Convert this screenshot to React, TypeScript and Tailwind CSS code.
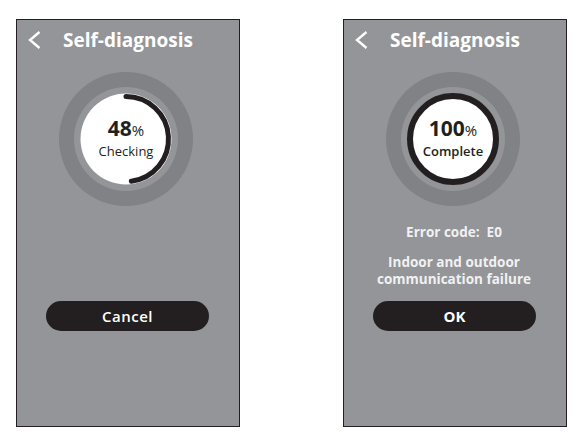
const FONT = { fontFamily: '"Open Sans", "Liberation Sans", sans-serif' };

function Gauge({ percent, label }: { percent: number; label: string }) {
  const r = 42.5;
  const angle = (percent / 100) * 2 * Math.PI;
  const ex = 67 + r * Math.sin(angle);
  const ey = 67 - r * Math.cos(angle);
  const large = percent > 50 ? 1 : 0;

  return (
    <div className="relative w-[134px] h-[134px]">
      <svg width="134" height="134" viewBox="0 0 134 134" className="absolute inset-0">
        <circle cx="67" cy="67" r="67" fill="#808285" />
        <circle cx="67" cy="67" r="52" fill="#939598" />
        <circle cx="67" cy="67" r="45.5" fill="#ffffff" />
        {percent >= 100 ? (
          <circle cx="67" cy="67" r="43" fill="none" stroke="#231f20" strokeWidth="6" />
        ) : (
          <path
            d={`M 67 ${67 - r} A ${r} ${r} 0 ${large} 1 ${ex} ${ey}`}
            fill="none"
            stroke="#231f20"
            strokeWidth="5"
            strokeLinecap="round"
          />
        )}
      </svg>
      <div className="absolute inset-0 flex flex-col items-center justify-center text-[#231f20] pb-[3px]">
        <div className="leading-none">
          <span className="text-[21px] font-bold">{percent}</span>
          <span className="text-[15px]">%</span>
        </div>
        <div className={`text-[13px] leading-none mt-[6px] ${percent >= 100 ? 'font-semibold' : ''}`}>{label}</div>
      </div>
    </div>
  );
}

function Header() {
  return (
    <div className="flex items-center h-[18px] mt-[11px]">
      <svg width="13" height="18" viewBox="0 0 13 18" className="ml-[11px]">
        <polyline points="11.5,1 2,9 11.5,17" fill="none" stroke="#ffffff" strokeWidth="2.4" strokeLinejoin="miter" />
      </svg>
      <span className="ml-[22px] text-white text-[19px] font-bold leading-none">Self-diagnosis</span>
    </div>
  );
}

function PillButton({ children, bold }: { children: string; bold?: boolean }) {
  return (
    <button
      className={`w-[163px] h-[30px] rounded-full bg-[#231f20] text-white text-[15px] ml-[29px] ${bold ? 'font-bold' : 'font-semibold tracking-[0.5px]'}`}
    >
      {children}
    </button>
  );
}

export default function App() {
  return (
    <div className="w-[585px] h-[446px] bg-white flex pl-[16px] pt-[19px] gap-[103px]" style={FONT}>
      {/* Checking */}
      <div className="w-[224px] h-[408px] bg-[#939598] border border-[#231f20] flex flex-col">
        <Header />
        <div className="ml-[42px] mt-[23px]">
          <Gauge percent={48} label="Checking" />
        </div>
        <div className="mt-[95px]">
          <PillButton>Cancel</PillButton>
        </div>
      </div>

      {/* Complete */}
      <div className="w-[224px] h-[408px] bg-[#939598] border border-[#231f20] flex flex-col">
        <Header />
        <div className="ml-[42px] mt-[23px]">
          <Gauge percent={100} label="Complete" />
        </div>
        <div className="w-[220px] text-center text-[#f1f1f2] font-bold text-[13.5px] leading-[17px]">
          <div className="mt-[18px]">Error code:&nbsp; E0</div>
          <div className="mt-[13px]">Indoor and outdoor</div>
          <div>communication failure</div>
        </div>
        <div className="mt-[13px]">
          <PillButton bold>OK</PillButton>
        </div>
      </div>
    </div>
  );
}
